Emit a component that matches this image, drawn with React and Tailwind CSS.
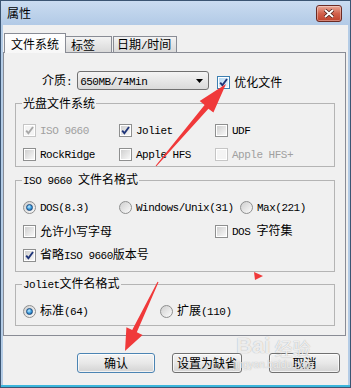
const CJK = /([\u3000-\u9fff\uff00-\uffef]+)/;

function T({ s, gray }) {
  return (
    <span className={gray ? 'whitespace-pre text-[#a0a0a0]' : 'whitespace-pre'}>
      {s
        .split(CJK)
        .filter(Boolean)
        .map((part, i) =>
          CJK.test(part) ? (
            <span key={i}>{part}</span>
          ) : (
            <span key={i} className="font-['Liberation_Mono',monospace] text-[11px] tracking-[-0.5px]">
              {part}
            </span>
          )
        )}
    </span>
  );
}

function Check({ checked, disabled, hot }) {
  const border = disabled ? 'border-[#c5c5c5]' : hot ? 'border-[#3c7fb1]' : 'border-[#8e8f8f]';
  const fill = disabled
    ? 'bg-[#f4f4f4]'
    : hot
      ? 'bg-linear-to-br from-[#b3d8f3] to-[#eaf5fd]'
      : 'bg-linear-to-br from-[#d0d0d0] to-[#f8f8f8]';
  return (
    <span className={`relative block h-[13px] w-[13px] shrink-0 border bg-white p-[1px] ${border}`}>
      <span className={`block h-full w-full ${fill}`} />
      {checked && (
        <svg className="absolute left-0 top-0" width="11" height="11" viewBox="0 0 11 11">
          <path
            d="M2.2 5.6 L4.4 8.2 L9 2"
            fill="none"
            stroke={disabled ? '#a8a8a8' : '#1f3579'}
            strokeWidth="1.9"
          />
        </svg>
      )}
    </span>
  );
}

function Radio({ checked }) {
  return (
    <span className="flex h-[13px] w-[13px] shrink-0 items-center justify-center rounded-full border border-[#8e8f8f] bg-linear-to-br from-[#cfcfcf] to-[#fbfbfb]">
      {checked && (
        <span className="block h-[7px] w-[7px] rounded-full border border-[#1b4b80] bg-[radial-gradient(circle_at_40%_35%,#c4ecff_0%,#3d9fe0_50%,#12518f_100%)]" />
      )}
    </span>
  );
}

function Opt({ kind = 'check', checked, disabled, hot, label, w = '' }) {
  return (
    <div className={`flex h-[16px] items-center gap-[4px] ${w}`}>
      {kind === 'radio' ? <Radio checked={checked} /> : <Check checked={checked} disabled={disabled} hot={hot} />}
      <T s={label} gray={disabled} />
    </div>
  );
}

function Group({ title, className, children }) {
  return (
    <fieldset className={`ml-[11px] w-[320px] min-w-0 border border-[#b4b4b4] ${className}`}>
      <legend className="ml-[6px] px-[1px] leading-[16px]">
        <T s={title} />
      </legend>
      {children}
    </fieldset>
  );
}

function Btn({ label, w, def }) {
  return (
    <div
      className={`flex h-[20px] items-center justify-center rounded-[3px] border bg-linear-to-b from-[#f4f4f4] via-[#e8e8e8] to-[#d3d3d3] shadow-[inset_0_0_0_1px_rgba(255,255,255,0.7)] ${w} ${
        def ? 'border-[#4b84b3]' : 'border-[#707070]'
      }`}
    >
      {label}
    </div>
  );
}

export default function App() {
  return (
    <div className="relative flex h-[388px] w-[351px] flex-col overflow-hidden border border-[#3b5573] bg-[#b4cce6] font-['Noto_Sans_CJK_SC',sans-serif] text-[12px] leading-none text-black">
      {/* title bar */}
      <div className="flex h-[24px] shrink-0 items-center justify-between bg-linear-to-b from-[#cadcf1] to-[#b2cae6] pl-[6px] pr-[8px]">
        <span className="text-[12px]">属性</span>
        <span className="flex h-[17px] w-[26px] items-center justify-center rounded-[3px] border border-[#6b2a23] bg-linear-to-b from-[#e9a796] via-[#d2624d] to-[#bf412b] shadow-[inset_0_0_0_1px_rgba(255,255,255,0.35)]">
          <svg width="12" height="9" viewBox="0 0 12 9">
            <path d="M2 1 L10 8 M10 1 L2 8" stroke="#4a1d17" strokeWidth="3.4" />
            <path d="M2 1 L10 8 M10 1 L2 8" stroke="#ffffff" strokeWidth="1.9" />
          </svg>
        </span>
      </div>

      {/* dialog body */}
      <div className="mx-[2px] flex flex-1 flex-col bg-[#f0f0f0] pt-[8px]">
        {/* tabs */}
        <div className="relative z-10 -mb-px flex h-[20px] items-end">
          <div className="ml-[1px] flex h-[20px] w-[62px] items-center border-x border-t border-[#898c95] bg-linear-to-b from-white to-[#f7f7f7] pl-[6px]">
            文件系统
          </div>
          <div className="mb-px flex h-[16px] w-[46px] items-center border-r border-t border-[#898c95] bg-linear-to-b from-[#f3f3f3] to-[#d9d9d9] pl-[5px]">
            标签
          </div>
          <div className="mb-px ml-[1px] flex h-[16px] w-[64px] items-center border-x border-t border-[#898c95] bg-linear-to-b from-[#f3f3f3] to-[#d9d9d9] pl-[3px]">
            <T s="日期/时间" />
          </div>
        </div>

        {/* panel */}
        <div className="flex h-[284px] w-[343px] flex-col border border-[#898c95] bg-[#f0f0f0] pt-[18px]">
          <div className="flex h-[19px] items-center pl-[38px]">
            <T s="介质:" />
            <div className="ml-[5px] flex h-[19px] w-[132px] items-center justify-between rounded-[3px] border border-[#707070] bg-linear-to-b from-[#f4f4f4] to-[#dadada] pl-[2px] pr-[5px]">
              <T s="650MB/74Min" />
              <svg width="7" height="4" viewBox="0 0 7 4">
                <path d="M0 0 H7 L3.5 4 Z" fill="#000" />
              </svg>
            </div>
            <div className="ml-[8px] mt-[3px] flex items-center gap-[4px]">
              <Check checked hot />
              <span>优化文件</span>
            </div>
          </div>

          <Group title="光盘文件系统" className="mt-[5px] pb-[4px]">
            <div className="grid grid-cols-[96px_96px_96px] gap-y-[8px] pl-[7px] pt-[11px]">
              <Opt label="ISO 9660" checked disabled />
              <Opt label="Joliet" checked />
              <Opt label="UDF" />
              <Opt label="RockRidge" />
              <Opt label="Apple HFS" />
              <Opt label="Apple HFS+" disabled />
            </div>
          </Group>

          <Group title="ISO 9660 文件名格式" className="mt-[4px] pb-[8px]">
            <div className="flex flex-col gap-[8px] pl-[7px] pt-[10px]">
              <div className="flex">
                <Opt kind="radio" label="DOS(8.3)" checked w="w-[96px]" />
                <Opt kind="radio" label="Windows/Unix(31)" w="w-[121px]" />
                <Opt kind="radio" label="Max(221)" />
              </div>
              <div className="flex">
                <Opt label="允许小写字母" w="w-[192px]" />
                <Opt label="DOS 字符集" />
              </div>
              <Opt label="省略ISO 9660版本号" checked />
            </div>
          </Group>

          <Group title="Joliet文件名格式" className="mt-[3px] pb-[6px]">
            <div className="flex pl-[7px] pt-[10px]">
              <Opt kind="radio" label="标准(64)" checked w="w-[137px]" />
              <Opt kind="radio" label="扩展(110)" />
            </div>
          </Group>
        </div>

        {/* buttons */}
        <div className="mt-[17px] flex">
          <div className="ml-[74px]">
            <Btn label="确认" w="w-[78px]" def />
          </div>
          <div className="ml-[17px]">
            <Btn label="设置为缺省" w="w-[70px]" />
          </div>
          <div className="ml-[27px]">
            <Btn label="取消" w="w-[71px]" />
          </div>
        </div>
      </div>
      <div className="h-[2px] shrink-0 bg-[#3cb6dc]" />

      {/* watermark */}
      <div className="pointer-events-none absolute left-[232px] top-[334px] flex flex-col items-center text-white/80 [text-shadow:0_0_1px_#9a9a9a]">
        <div className="flex items-end gap-[4px]">
          <span className="font-['Liberation_Sans',sans-serif] text-[22px] font-bold">Bai</span>
          <span className="text-[18px]">经验</span>
        </div>
        <span className="mt-[3px] font-['Liberation_Sans',sans-serif] text-[10px]">jingyan.baidu.com</span>
      </div>

      {/* red annotation arrows */}
      <svg className="pointer-events-none absolute left-[-1px] top-[-1px]" width="351" height="388" viewBox="0 0 351 388">
        <polygon
          points="155.6,165.7 204.6,104.9 199.7,101 226,84 213.4,112.6 208.4,108.7 156.4,166.3"
          fill="#f0393a"
        />
        <polygon
          points="157.5,281.8 132.2,330.1 126.4,327.3 125,351 142.6,335.1 136.8,332.3 158.5,282.2"
          fill="#f0393a"
        />
        <polygon points="254,272 263,276 255,280" fill="#f0393a" />
      </svg>
    </div>
  );
}
